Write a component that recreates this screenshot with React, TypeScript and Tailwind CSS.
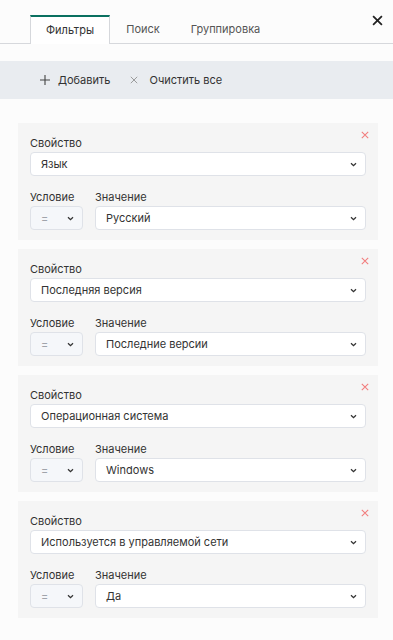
const filters = [
  { prop: "Язык", value: "Русский" },
  { prop: "Последняя версия", value: "Последние версии" },
  { prop: "Операционная система", value: "Windows" },
  { prop: "Используется в управляемой сети", value: "Да" },
];

function Cross({ size, color, width, className }: { size: number; color: string; width: number; className?: string }) {
  return (
    <svg width={size} height={size} viewBox="0 0 10 10" className={className}>
      <path d="M1 1L9 9M9 1L1 9" fill="none" stroke={color} strokeWidth={width} />
    </svg>
  );
}

function Chevron() {
  return (
    <svg width="7" height="5" viewBox="0 0 7 5" className="shrink-0">
      <path d="M1 1.2l2.5 2.5L6 1.2" fill="none" stroke="#333" strokeWidth="1.3" />
    </svg>
  );
}

function Select({ text, disabled }: { text: string; disabled?: boolean }) {
  return (
    <div
      className={
        disabled
          ? "flex h-[24px] items-center justify-between rounded-[4px] border border-[#dfe2e8] bg-[#f5f7fa] pl-[10px] pr-[8px] text-[11px] text-[#a0a4ab]"
          : "flex h-[24px] items-center justify-between rounded-[4px] border border-[#dfe2e8] bg-white pl-[10px] pr-[8px] text-[11px] text-[#333]"
      }
    >
      <span>{text}</span>
      <Chevron />
    </div>
  );
}

function FilterCard({ prop, value }: { prop: string; value: string }) {
  return (
    <div className="relative h-[117px] w-[360px] bg-[#f5f5f5] px-[12px] pt-[13px]">
      <Cross size={8} color="#f27c7c" width={1.3} className="absolute right-[9px] top-[8px]" />
      <div className="mb-[2px] text-[11px] leading-[14px] text-[#333]">Свойство</div>
      <Select text={prop} />
      <div className="mt-[14px] flex gap-[12px]">
        <div className="w-[53px]">
          <div className="mb-[2px] text-[11px] leading-[14px] text-[#333]">Условие</div>
          <Select text="=" disabled />
        </div>
        <div className="flex-1">
          <div className="mb-[2px] text-[11px] leading-[14px] text-[#333]">Значение</div>
          <Select text={value} />
        </div>
      </div>
    </div>
  );
}

export default function App() {
  return (
    <div className="min-h-[640px] w-[393px] bg-[#fcfcfc] font-['Inter',sans-serif]">
      <div className="relative flex h-[44px] items-end border-b border-[#d6d8dc] pt-[15px]">
        <div className="ml-[30px] flex h-[29px] w-[80px] -mb-px items-center justify-center border-x border-t-2 border-x-[#d6d8dc] border-t-[#0a7060] bg-white text-[11px] text-[#333]">
          Фильтры
        </div>
        <div className="flex h-[28px] w-[66px] items-center justify-center text-[11px] text-[#555]">Поиск</div>
        <div className="flex h-[28px] w-[99px] items-center justify-center text-[11px] text-[#555]">Группировка</div>
        <Cross size={11} color="#222" width={1.6} className="absolute right-[10px] top-[15px]" />
      </div>

      <div className="mt-[17px] flex h-[38px] items-center bg-[#e9ecf0] pl-[40px] text-[11px] text-[#333]">
        <svg width="10" height="10" viewBox="0 0 10 10">
          <path d="M5 0V10M0 5H10" fill="none" stroke="#444" strokeWidth="1.1" />
        </svg>
        <span className="ml-[8px]">Добавить</span>
        <Cross size={8} color="#888" width={1} className="ml-[20px]" />
        <span className="ml-[11px]">Очистить все</span>
      </div>

      <div className="ml-[18px] mt-[24px] flex flex-col gap-[9px]">
        {filters.map((f) => (
          <FilterCard key={f.prop} prop={f.prop} value={f.value} />
        ))}
      </div>
    </div>
  );
}
